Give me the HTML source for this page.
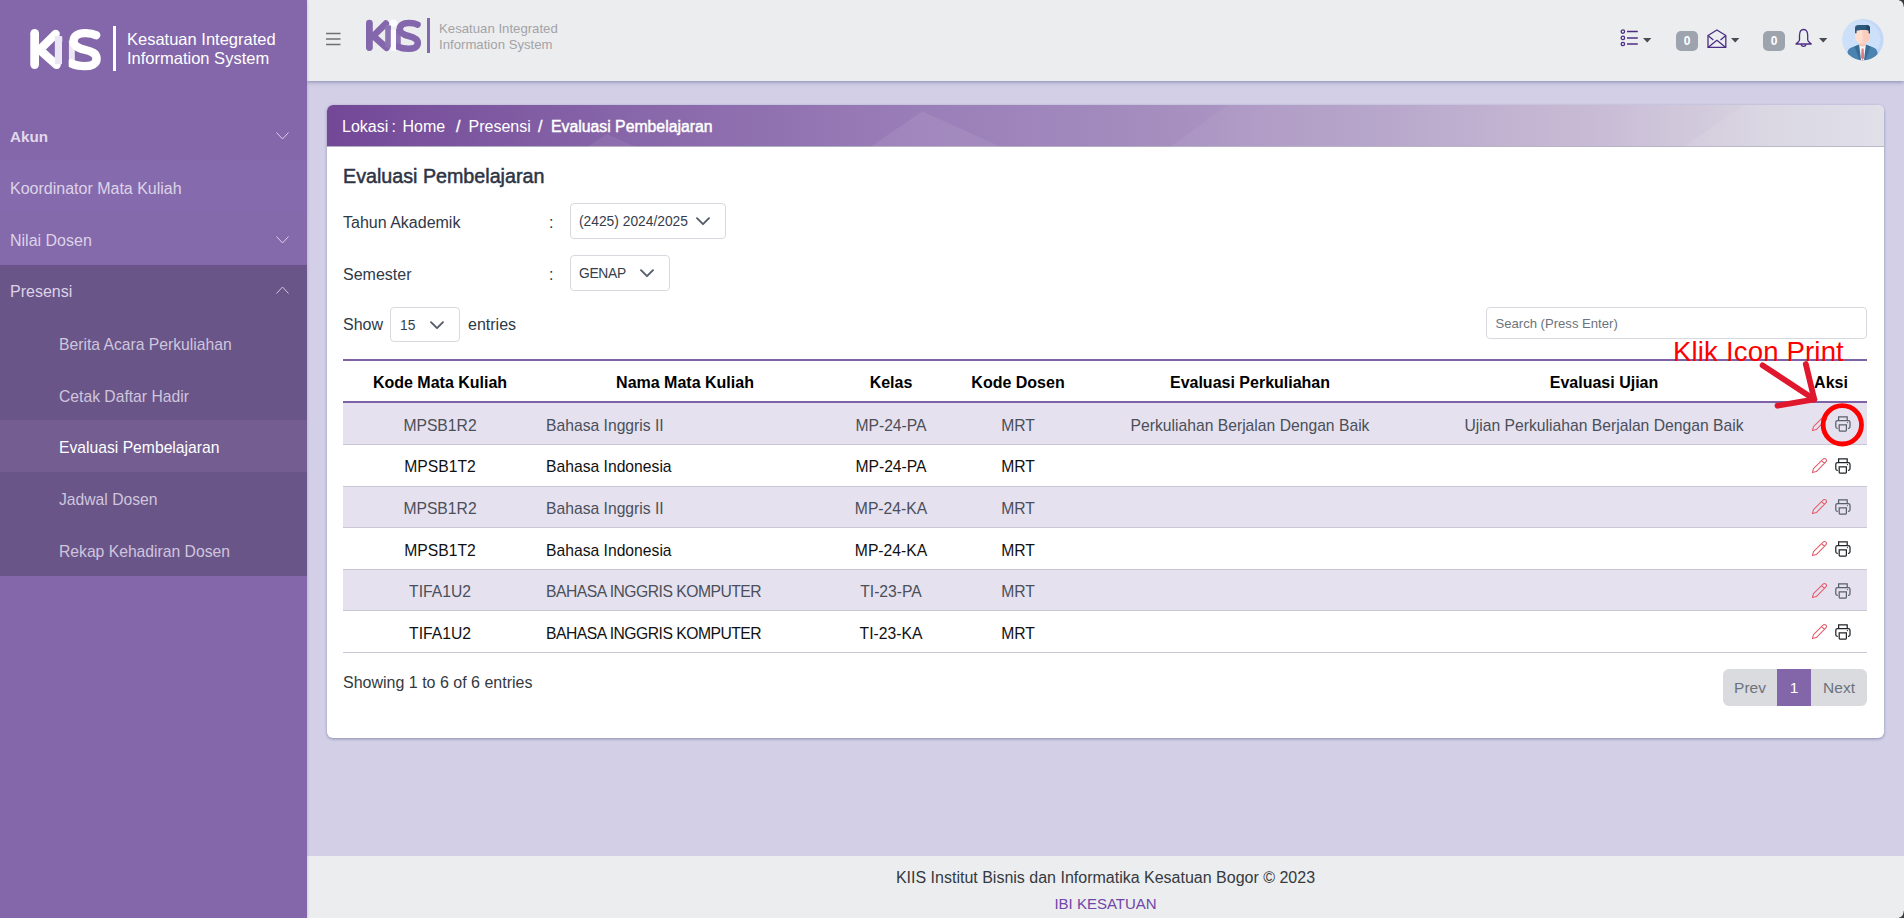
<!DOCTYPE html>
<html><head><meta charset="utf-8">
<style>
*{box-sizing:border-box;margin:0;padding:0}
html,body{width:1904px;height:918px;overflow:hidden}
body{font-family:"Liberation Sans",sans-serif;background:#D2CFE7;position:relative;color:#212529}
.abs{position:absolute}
#sb{left:0;top:0;width:307px;height:918px;background:#8367AA;box-shadow:1px 0 2px rgba(60,60,90,.15);z-index:2}
.mi{position:absolute;left:0;width:307px;height:52px;color:#DDD3E8;font-size:16px;line-height:52px;padding-left:10px;padding-top:2.5px;white-space:nowrap}
.sub{background:#6A5589}
.si{position:absolute;left:0;width:307px;height:52px;color:#CFC6DD;font-size:15.7px;line-height:52px;padding-left:59px;padding-top:1.5px;white-space:nowrap}
.chev{position:absolute;left:276px;width:13px;height:8px}
#hd{left:307px;top:0;width:1597px;height:81px;background:#ECEDEF;box-shadow:0 1px 4px rgba(70,80,120,.55)}
#card{left:327px;top:105px;width:1557px;height:633px;background:#fff;border-radius:6px;box-shadow:0 1px 3px rgba(70,80,120,.5);overflow:hidden}
#bc{left:0;top:0;width:1557px;height:42px;background:linear-gradient(90deg,#734897 0%,#8664A8 18%,#9A7EB8 38%,#A48CBE 52%,#B5A3C9 68%,#C7B9D4 82%,#D5D1DF 92%,#DEDDE6 100%);border-bottom:1px solid #B3AFC2}
#bc .t{position:absolute;top:1px;line-height:42px;color:#fff;font-size:16px;white-space:nowrap}
.lbl{position:absolute;font-size:16px;color:#2F3947;white-space:nowrap}
.sel{position:absolute;border:1px solid #D6D9DE;border-radius:4px;background:#fff;font-size:13.8px;color:#343E4D;white-space:nowrap}
table{position:absolute;left:16px;top:254px;width:1524px;border-collapse:collapse;table-layout:fixed}
th{height:42px;font-size:16px;font-weight:bold;color:#000;text-align:center;border-top:2px solid #7D62A8;border-bottom:2px solid #7D62A8;padding:4px 0 0}
td{height:41.6px;font-size:15.7px;text-align:center;border-bottom:1px solid #C9C6D5;padding:4px 0 0;white-space:nowrap}
tr.s td{background:#E5E1EF;color:#4A4F5A}
tr.w td{color:#111}
td.l{text-align:left;padding-left:9px}
.badge{width:22px;height:20px;border-radius:5px;background:#9EA4AE;color:#fff;font-size:12px;font-weight:bold;text-align:center;line-height:20px}
#hd{--k:#8366AB;--k2:#8C74B4;--ki:#FCFBFF}
#sb{--k:#fff;--k2:#EAE6F3;--ki:#8367AA}
#ft{left:307px;top:856px;width:1597px;height:62px;background:#ECEDEF;text-align:center}
</style></head><body>


<div id="sb" class="abs">
  <!-- logo -->
  <svg class="abs" style="left:29px;top:27.7px" width="76.8" height="43.5" viewBox="0 0 60 34">
  <path d="M4.4 4.2V28.6" stroke="var(--k)" stroke-width="6.8" stroke-linecap="round" fill="none"/>
  <path d="M20.8 4.6L8.3 17L21.5 28.8" stroke="var(--k)" stroke-width="6.6" stroke-linecap="round" stroke-linejoin="round" fill="none"/>
  <rect x="20.2" y="6.3" width="5.8" height="22" fill="var(--k2)"/>
  <path d="M31 10H35.8V26H31Z" fill="var(--k2)"/>
  <path d="M52.5 5.6C49 3.8 46.5 4 43.6 4C38 4 34.8 6.5 34.8 10.3C34.8 14.5 39.5 16 43.6 17C49 18.3 52.8 19.8 52.8 24C52.8 28.2 48.5 29.8 43.4 29.8C39.5 29.8 35.5 29 32.8 27.6" stroke="var(--k)" stroke-width="6.6" stroke-linecap="round" fill="none"/>
  <rect x="25.8" y="10.8" width="5.2" height="21" fill="var(--ki)"/>
  <circle cx="28.5" cy="4.1" r="3.7" fill="var(--ki)"/>
</svg>
  <div class="abs" style="left:113px;top:26px;width:3px;height:45px;background:#fff"></div>
  <div class="abs" style="left:127px;top:29.5px;color:#fff;font-size:16.5px;line-height:19.5px;white-space:nowrap">Kesatuan Integrated<br>Information System</div>

  <div class="mi" style="top:108px;font-weight:bold;font-size:15.2px;color:#E2D8EC">Akun</div>
  <svg class="chev" style="top:132px" viewBox="0 0 13 8"><path d="M.5 .5 L6.5 7 L12.5 .5" fill="none" stroke="#DCD2E8" stroke-width="1"/></svg>
  <div class="mi" style="top:160px;background:#856BAD">Koordinator Mata Kuliah</div>
  <div class="mi" style="top:212px;background:#8469AB">Nilai Dosen</div>
  <svg class="chev" style="top:236px" viewBox="0 0 13 8"><path d="M.5 .5 L6.5 7 L12.5 .5" fill="none" stroke="#DCD2E8" stroke-width="1"/></svg>
  <div class="abs sub" style="left:0;top:265px;width:307px;height:311px"></div>
  <div class="mi" style="top:265px;padding-top:0.5px">Presensi</div>
  <svg class="chev" style="top:286px" viewBox="0 0 13 8"><path d="M.5 7.5 L6.5 1 L12.5 7.5" fill="none" stroke="#D0C6DE" stroke-width="1"/></svg>
  <div class="si" style="top:317px">Berita Acara Perkuliahan</div>
  <div class="si" style="top:369px">Cetak Daftar Hadir</div>
  <div class="si" style="top:420px;background:#735D91;color:#fff">Evaluasi Pembelajaran</div>
  <div class="si" style="top:472px">Jadwal Dosen</div>
  <div class="si" style="top:524px">Rekap Kehadiran Dosen</div>
</div>

<div id="hd" class="abs">
  <svg class="abs" style="left:19px;top:32px" width="15" height="14" viewBox="0 0 15 14"><g stroke="#707070" stroke-width="1.3"><path d="M0 1.5H14.5M0 7H14.5M0 12.5H14.5"/></g></svg>
  <svg class="abs" style="left:58px;top:19px" width="60" height="34" viewBox="0 0 60 34">
  <path d="M4.4 4.2V28.6" stroke="var(--k)" stroke-width="6.8" stroke-linecap="round" fill="none"/>
  <path d="M20.8 4.6L8.3 17L21.5 28.8" stroke="var(--k)" stroke-width="6.6" stroke-linecap="round" stroke-linejoin="round" fill="none"/>
  <rect x="20.2" y="6.3" width="5.8" height="22" fill="var(--k2)"/>
  <path d="M31 10H35.8V26H31Z" fill="var(--k2)"/>
  <path d="M52.5 5.6C49 3.8 46.5 4 43.6 4C38 4 34.8 6.5 34.8 10.3C34.8 14.5 39.5 16 43.6 17C49 18.3 52.8 19.8 52.8 24C52.8 28.2 48.5 29.8 43.4 29.8C39.5 29.8 35.5 29 32.8 27.6" stroke="var(--k)" stroke-width="6.6" stroke-linecap="round" fill="none"/>
  <rect x="25.8" y="10.8" width="5.2" height="21" fill="var(--ki)"/>
  <circle cx="28.5" cy="4.1" r="3.7" fill="var(--ki)"/>
</svg>
  <div class="abs" style="left:120px;top:18px;width:3px;height:35px;background:#8467AC"></div>
  <div class="abs" style="left:132px;top:21px;color:#A3A3A6;font-size:13.2px;line-height:15.6px;white-space:nowrap">Kesatuan Integrated<br>Information System</div>
  <svg class="abs" style="left:1312px;top:28px" width="20" height="20" viewBox="0 0 20 20"><g fill="none" stroke="#4B2E83" stroke-width="1.3"><circle cx="3.9" cy="3.6" r="1.7"/><circle cx="3.9" cy="9.9" r="1.7"/><circle cx="3.9" cy="16" r="1.7"/><path d="M8 3.6H18.8M8 9.9H18.8M8 16H18.8" stroke-width="1.5"/></g></svg>
  <svg class="abs" style="left:1336px;top:38px" width="9" height="5" viewBox="0 0 9 5"><path d="M0 0H8.4L4.2 4.6Z" fill="#4A4B55"/></svg>
  <div class="abs badge" style="left:1369px;top:31px">0</div>
  <svg class="abs" style="left:1400px;top:28.5px" width="21" height="20" viewBox="0 0 21 20"><g fill="none" stroke="#4B2E83" stroke-width="1.3" stroke-linejoin="round"><path d="M1 6.5L9.9 1L18.8 6.5V18.4H1Z"/><path d="M1 18.4L9.9 11.3L18.8 18.4M1 6.5L6.3 10.9M18.8 6.5L13.5 10.9"/></g></svg>
  <svg class="abs" style="left:1424px;top:38px" width="9" height="5" viewBox="0 0 9 5"><path d="M0 0H8.4L4.2 4.6Z" fill="#4A4B55"/></svg>
  <div class="abs badge" style="left:1456px;top:31px">0</div>
  <svg class="abs" style="left:1488px;top:28px" width="18" height="20" viewBox="0 0 18 20"><g fill="none" stroke="#4B2E83" stroke-width="1.3" stroke-linejoin="round"><path d="M8.6 1.5C5.5 1.5 4.5 4.5 4.5 7.5V12C4.5 13.5 2 15 1 16H16.2C15.2 15 12.7 13.5 12.7 12V7.5C12.7 4.5 11.7 1.5 8.6 1.5Z"/><path d="M6.3 16.2C6.3 19 10.9 19 10.9 16.2"/></g></svg>
  <svg class="abs" style="left:1512px;top:38px" width="9" height="5" viewBox="0 0 9 5"><path d="M0 0H8.4L4.2 4.6Z" fill="#4A4B55"/></svg>
  <svg class="abs" style="left:1535px;top:19px" width="42" height="42" viewBox="0 0 42 42">
    <defs><clipPath id="avc"><circle cx="21" cy="20.6" r="20.6"/></clipPath></defs>
    <g clip-path="url(#avc)">
      <rect width="42" height="42" fill="#C3D8F7"/>
      <circle cx="18.8" cy="20.6" r="19.6" fill="#CDE0FA"/>
      <path d="M5.5 42V33.5C6 30 8.5 28.6 12 27.5L17 25.8H24L29 27.5C32.5 28.6 35 30 35.5 33.5V42Z" fill="#4A83B0"/>
      <path d="M12.5 27.4L16.8 25.8L19.5 41H17.5Z M28.5 27.4L24.2 25.8L21.5 41H23.5Z" fill="#3A6D96"/>
      <path d="M17.2 25.6H23.8L22 41H19Z" fill="#F4F8FC"/>
      <path d="M19.6 29.6H21.6L22.2 38.5L20.6 41.2L19 38.5Z" fill="#E07A82"/>
      <path d="M17.6 21V26.5C18.5 28 22.5 28 23.4 26.5V21Z" fill="#F5C4B2"/>
      <path d="M13.2 13C13.2 10 15.5 9.5 20.5 9.5C25.5 9.5 28 10 28 13V18.5C28 22 25 24.6 20.6 24.6C16.2 24.6 13.2 22 13.2 18.5Z" fill="#FFDED2"/>
      <path d="M20.6 9.5C25.5 9.5 28 10 28 13V18.5C28 22 25 24.6 20.6 24.6Z" fill="#FBCDBC"/>
      <path d="M13 14.3V9.2C13 7 14.2 5.9 16.5 5.9H24.5C26.5 5.9 27.2 6.8 28 8.2V14.3H26.8V11.6C24 10.8 17 10.8 14.6 11.8V14.3Z" fill="#2E5A7D"/>
      <path d="M24.5 5.9C26.5 5.9 27.2 6.8 28 8.2V14.3H26.8V11.6L24.5 11Z" fill="#24486A"/>
    </g>
  </svg>
</div>

<div id="card" class="abs">
  <div id="bc" class="abs">
    <svg class="abs" style="left:0;top:0" width="1557" height="42" viewBox="0 0 1557 42"><g fill="#fff">
      <path d="M260.6 42L280 29L309 42Z" fill-opacity=".07"/>
      <path d="M543 42L595.4 6.3L674 42Z" fill-opacity=".07"/>
      <path d="M843 42L901 0H1557V42Z" fill-opacity=".05"/>
      <path d="M1356 42L1418 0H1557V42Z" fill-opacity=".08"/>
    </g></svg>
    <span class="t" style="left:15px">Lokasi</span>
    <span class="t" style="left:64.5px">:</span>
    <span class="t" style="left:75.5px">Home</span>
    <span class="t" style="left:129px;-webkit-text-stroke:0.35px #fff">/</span>
    <span class="t" style="left:141.5px">Presensi</span>
    <span class="t" style="left:211px;-webkit-text-stroke:0.35px #fff">/</span>
    <span class="t" style="left:224px;font-size:15.8px;-webkit-text-stroke:0.45px #fff">Evaluasi Pembelajaran</span>
  </div>
  <div class="lbl" style="left:16px;top:59.5px;font-size:19.7px;color:#2D3445;-webkit-text-stroke:0.5px #2D3445">Evaluasi Pembelajaran</div>
  <div class="lbl" style="left:16px;top:109px">Tahun Akademik</div>
  <div class="lbl" style="left:222px;top:109px">:</div>
  <div class="sel" style="left:243px;top:98px;width:156px;height:36px;line-height:35px;padding-left:8px">(2425) 2024/2025</div>
  <div class="lbl" style="left:16px;top:161px">Semester</div>
  <div class="lbl" style="left:222px;top:161px">:</div>
  <div class="sel" style="left:243px;top:150px;width:100px;height:36px;line-height:35px;padding-left:8px;letter-spacing:-0.3px">GENAP</div>
  <div class="lbl" style="left:16px;top:211px">Show</div>
  <div class="sel" style="left:63px;top:202px;width:70px;height:35px;line-height:36px;padding-left:9px">15</div>
  <div class="lbl" style="left:141px;top:211px">entries</div>
  <div class="sel" style="left:1159px;top:202px;width:381px;height:32px;line-height:31px;padding-left:8.5px;color:#6C737D;font-size:13.1px">Search (Press Enter)</div>

  <table>
    <colgroup><col style="width:194px"><col style="width:296px"><col style="width:116px"><col style="width:138px"><col style="width:326px"><col style="width:382px"><col style="width:72px"></colgroup>
    <tr><th>Kode Mata Kuliah</th><th>Nama Mata Kuliah</th><th>Kelas</th><th>Kode Dosen</th><th>Evaluasi Perkuliahan</th><th>Evaluasi Ujian</th><th>Aksi</th></tr>
    <tr class="s" style="height:42.6px"><td>MPSB1R2</td><td class="l">Bahasa Inggris II</td><td>MP-24-PA</td><td>MRT</td><td>Perkuliahan Berjalan Dengan Baik</td><td>Ujian Perkuliahan Berjalan Dengan Baik</td><td></td></tr>
    <tr class="w"><td>MPSB1T2</td><td class="l">Bahasa Indonesia</td><td>MP-24-PA</td><td>MRT</td><td></td><td></td><td></td></tr>
    <tr class="s"><td>MPSB1R2</td><td class="l">Bahasa Inggris II</td><td>MP-24-KA</td><td>MRT</td><td></td><td></td><td></td></tr>
    <tr class="w"><td>MPSB1T2</td><td class="l">Bahasa Indonesia</td><td>MP-24-KA</td><td>MRT</td><td></td><td></td><td></td></tr>
    <tr class="s"><td>TIFA1U2</td><td class="l" style="letter-spacing:-0.5px">BAHASA INGGRIS KOMPUTER</td><td>TI-23-PA</td><td>MRT</td><td></td><td></td><td></td></tr>
    <tr class="w"><td>TIFA1U2</td><td class="l" style="letter-spacing:-0.5px">BAHASA INGGRIS KOMPUTER</td><td>TI-23-KA</td><td>MRT</td><td></td><td></td><td></td></tr>
  </table>

<svg class="abs" style="left:369px;top:112px" width="14" height="9" viewBox="0 0 14 9"><path d="M1 1.2L7 7.2L13 1.2" fill="none" stroke="#555D6A" stroke-width="1.9" stroke-linecap="round" stroke-linejoin="round"/></svg><svg class="abs" style="left:313px;top:164px" width="14" height="9" viewBox="0 0 14 9"><path d="M1 1.2L7 7.2L13 1.2" fill="none" stroke="#555D6A" stroke-width="1.9" stroke-linecap="round" stroke-linejoin="round"/></svg><svg class="abs" style="left:103px;top:216px" width="14" height="9" viewBox="0 0 14 9"><path d="M1 1.2L7 7.2L13 1.2" fill="none" stroke="#555D6A" stroke-width="1.9" stroke-linecap="round" stroke-linejoin="round"/></svg>
  <div class="abs" style="left:1396px;top:564px;width:144px;height:37px;border-radius:6px;background:#D9DBDF;overflow:hidden;font-size:15.5px;line-height:37px;color:#6C737D">
    <div class="abs" style="left:0;top:0;width:54px;text-align:center">Prev</div>
    <div class="abs" style="left:54px;top:0;width:34px;height:37px;background:#8366AA;color:#fff;text-align:center">1</div>
    <div class="abs" style="left:88px;top:0;width:56px;text-align:center">Next</div>
  </div><svg class="abs" style="left:1483.7px;top:310.1px" width="17" height="17" viewBox="0 0 24 24"><path d="M17 3a2.83 2.83 0 1 1 4 4L7.5 20.5 2 22l1.5-5.5Z M15 5l4 4" fill="none" stroke="#E35D6A" stroke-width="1.5" stroke-linejoin="round"/></svg><svg class="abs" style="left:1508px;top:311px" width="16" height="16" viewBox="0 0 16 16"><g fill="none" stroke="#5A606B" stroke-width="1.25"><path d="M3.6 4.3V0.8H12.2V4.3"/><path d="M2.8 12.3H2.3C1.3 12.3 0.8 11.6 0.8 10.8V6.3C0.8 5.2 1.5 4.5 2.6 4.5H13.2C14.3 4.5 15 5.2 15 6.3V10.8C15 11.6 14.5 12.3 13.5 12.3H13"/><path d="M4.2 8.8H11.4V14.3C11.4 14.8 11.1 15 10.6 15H5C4.5 15 4.2 14.8 4.2 14.3Z"/></g><circle cx="12.5" cy="6.6" r=".65" fill="#5A606B"/></svg><svg class="abs" style="left:1483.7px;top:352.1px" width="17" height="17" viewBox="0 0 24 24"><path d="M17 3a2.83 2.83 0 1 1 4 4L7.5 20.5 2 22l1.5-5.5Z M15 5l4 4" fill="none" stroke="#E35D6A" stroke-width="1.5" stroke-linejoin="round"/></svg><svg class="abs" style="left:1508px;top:353px" width="16" height="16" viewBox="0 0 16 16"><g fill="none" stroke="#212529" stroke-width="1.25"><path d="M3.6 4.3V0.8H12.2V4.3"/><path d="M2.8 12.3H2.3C1.3 12.3 0.8 11.6 0.8 10.8V6.3C0.8 5.2 1.5 4.5 2.6 4.5H13.2C14.3 4.5 15 5.2 15 6.3V10.8C15 11.6 14.5 12.3 13.5 12.3H13"/><path d="M4.2 8.8H11.4V14.3C11.4 14.8 11.1 15 10.6 15H5C4.5 15 4.2 14.8 4.2 14.3Z"/></g><circle cx="12.5" cy="6.6" r=".65" fill="#212529"/></svg><svg class="abs" style="left:1483.7px;top:393.1px" width="17" height="17" viewBox="0 0 24 24"><path d="M17 3a2.83 2.83 0 1 1 4 4L7.5 20.5 2 22l1.5-5.5Z M15 5l4 4" fill="none" stroke="#E35D6A" stroke-width="1.5" stroke-linejoin="round"/></svg><svg class="abs" style="left:1508px;top:394px" width="16" height="16" viewBox="0 0 16 16"><g fill="none" stroke="#5A606B" stroke-width="1.25"><path d="M3.6 4.3V0.8H12.2V4.3"/><path d="M2.8 12.3H2.3C1.3 12.3 0.8 11.6 0.8 10.8V6.3C0.8 5.2 1.5 4.5 2.6 4.5H13.2C14.3 4.5 15 5.2 15 6.3V10.8C15 11.6 14.5 12.3 13.5 12.3H13"/><path d="M4.2 8.8H11.4V14.3C11.4 14.8 11.1 15 10.6 15H5C4.5 15 4.2 14.8 4.2 14.3Z"/></g><circle cx="12.5" cy="6.6" r=".65" fill="#5A606B"/></svg><svg class="abs" style="left:1483.7px;top:435.1px" width="17" height="17" viewBox="0 0 24 24"><path d="M17 3a2.83 2.83 0 1 1 4 4L7.5 20.5 2 22l1.5-5.5Z M15 5l4 4" fill="none" stroke="#E35D6A" stroke-width="1.5" stroke-linejoin="round"/></svg><svg class="abs" style="left:1508px;top:436px" width="16" height="16" viewBox="0 0 16 16"><g fill="none" stroke="#212529" stroke-width="1.25"><path d="M3.6 4.3V0.8H12.2V4.3"/><path d="M2.8 12.3H2.3C1.3 12.3 0.8 11.6 0.8 10.8V6.3C0.8 5.2 1.5 4.5 2.6 4.5H13.2C14.3 4.5 15 5.2 15 6.3V10.8C15 11.6 14.5 12.3 13.5 12.3H13"/><path d="M4.2 8.8H11.4V14.3C11.4 14.8 11.1 15 10.6 15H5C4.5 15 4.2 14.8 4.2 14.3Z"/></g><circle cx="12.5" cy="6.6" r=".65" fill="#212529"/></svg><svg class="abs" style="left:1483.7px;top:477.1px" width="17" height="17" viewBox="0 0 24 24"><path d="M17 3a2.83 2.83 0 1 1 4 4L7.5 20.5 2 22l1.5-5.5Z M15 5l4 4" fill="none" stroke="#E35D6A" stroke-width="1.5" stroke-linejoin="round"/></svg><svg class="abs" style="left:1508px;top:478px" width="16" height="16" viewBox="0 0 16 16"><g fill="none" stroke="#5A606B" stroke-width="1.25"><path d="M3.6 4.3V0.8H12.2V4.3"/><path d="M2.8 12.3H2.3C1.3 12.3 0.8 11.6 0.8 10.8V6.3C0.8 5.2 1.5 4.5 2.6 4.5H13.2C14.3 4.5 15 5.2 15 6.3V10.8C15 11.6 14.5 12.3 13.5 12.3H13"/><path d="M4.2 8.8H11.4V14.3C11.4 14.8 11.1 15 10.6 15H5C4.5 15 4.2 14.8 4.2 14.3Z"/></g><circle cx="12.5" cy="6.6" r=".65" fill="#5A606B"/></svg><svg class="abs" style="left:1483.7px;top:518.1px" width="17" height="17" viewBox="0 0 24 24"><path d="M17 3a2.83 2.83 0 1 1 4 4L7.5 20.5 2 22l1.5-5.5Z M15 5l4 4" fill="none" stroke="#E35D6A" stroke-width="1.5" stroke-linejoin="round"/></svg><svg class="abs" style="left:1508px;top:519px" width="16" height="16" viewBox="0 0 16 16"><g fill="none" stroke="#212529" stroke-width="1.25"><path d="M3.6 4.3V0.8H12.2V4.3"/><path d="M2.8 12.3H2.3C1.3 12.3 0.8 11.6 0.8 10.8V6.3C0.8 5.2 1.5 4.5 2.6 4.5H13.2C14.3 4.5 15 5.2 15 6.3V10.8C15 11.6 14.5 12.3 13.5 12.3H13"/><path d="M4.2 8.8H11.4V14.3C11.4 14.8 11.1 15 10.6 15H5C4.5 15 4.2 14.8 4.2 14.3Z"/></g><circle cx="12.5" cy="6.6" r=".65" fill="#212529"/></svg>
  <div class="abs" style="left:1346px;top:231px;font-size:27.6px;color:#FF0000;white-space:nowrap;line-height:32px;letter-spacing:0.15px">Klik Icon Print</div>
  <svg class="abs" style="left:1420px;top:240px" width="137" height="110" viewBox="0 0 137 110">
    <g fill="none" stroke="#E0182D" stroke-width="5.8" stroke-linecap="round" stroke-linejoin="round">
      <path d="M15.6 20.4L67.3 54.4"/>
      <path d="M58.8 19L67.3 54.4L30.5 60.7"/>
    </g>
    <circle cx="95.3" cy="79.8" r="19.2" fill="none" stroke="#FF0000" stroke-width="4.8"/>
  </svg>
  <div class="lbl" style="left:16px;top:569px;color:#343a40">Showing 1 to 6 of 6 entries</div>
</div>

<div id="ft" class="abs">
  <div style="position:absolute;left:0;width:1597px;top:13px;font-size:16px;color:#343A40">KIIS Institut Bisnis dan Informatika Kesatuan Bogor © 2023</div>
  <div style="position:absolute;left:0;width:1597px;top:39px;font-size:15px;color:#7046A8">IBI KESATUAN</div>
</div>

<div class="abs" style="right:0;top:0;width:5px;height:7px;background:radial-gradient(ellipse 5px 7px at 0 100%,transparent 85%,#3A3A3A 100%);z-index:5"></div>
<div class="abs" style="right:0;bottom:0;width:5px;height:7px;background:radial-gradient(ellipse 5px 7px at 0 0,transparent 85%,#3A3A3A 100%);z-index:5"></div>
</body></html>
